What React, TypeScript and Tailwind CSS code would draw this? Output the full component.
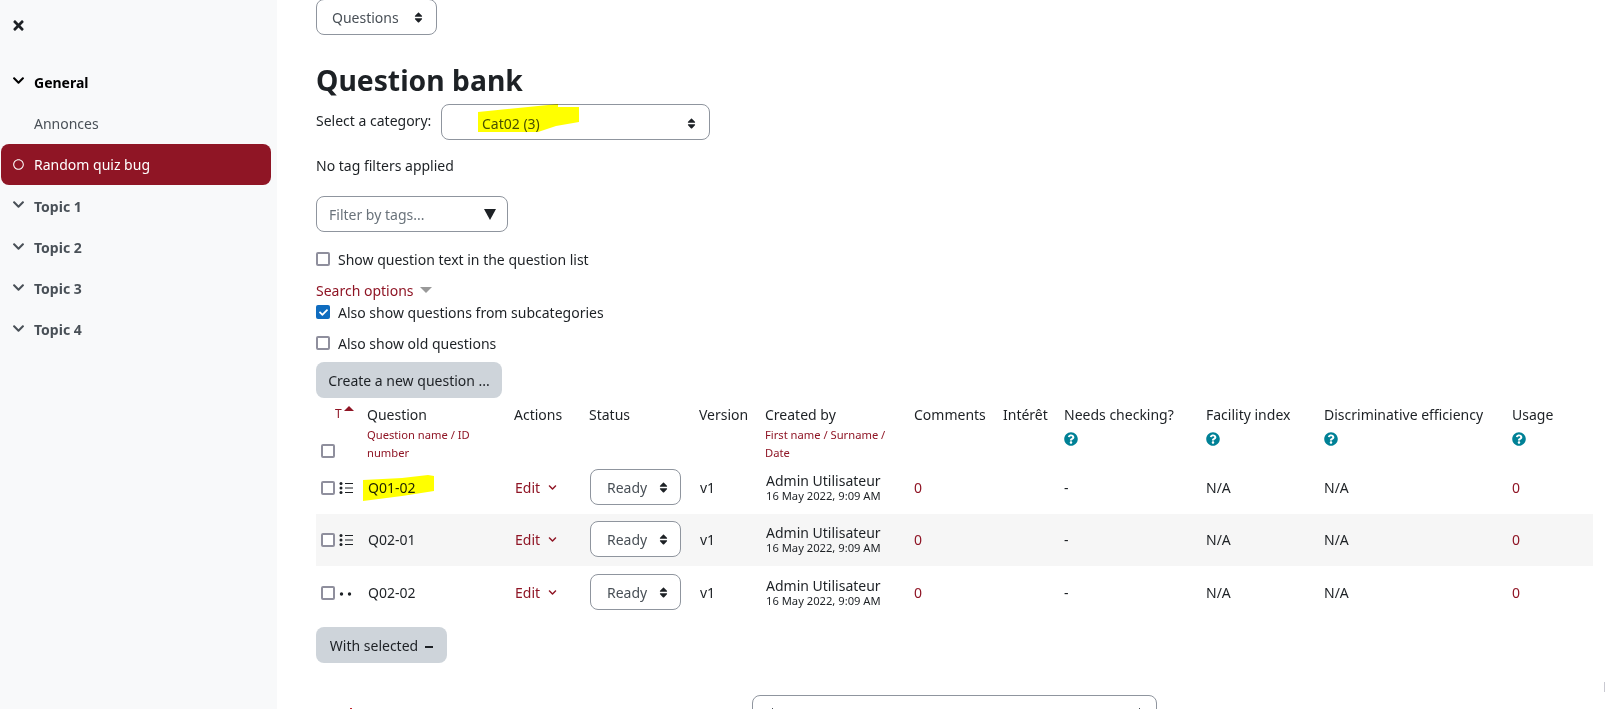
import React from "react";
import { FaChevronDown, FaQuestionCircle, FaRegCircle, FaSort, FaTimes, FaCheck } from "react-icons/fa";

const topics = ["Topic 1", "Topic 2", "Topic 3", "Topic 4"];

const questions = [
  { name: "Q01-02", icon: "list", highlighted: true, rowClass: "h-[52px]", bg: "" },
  { name: "Q02-01", icon: "list", highlighted: false, rowClass: "h-[52px]", bg: "bg-[#f6f6f6]" },
  { name: "Q02-02", icon: "dots", highlighted: false, rowClass: "h-[54px]", bg: "" },
];

function Checkbox({ checked = false }: { checked?: boolean }) {
  return checked ? (
    <span className="inline-flex h-[14px] w-[14px] shrink-0 items-center justify-center rounded-[2px] bg-[#0f6cbf] text-white">
      <FaCheck className="h-[9px] w-[9px]" />
    </span>
  ) : (
    <span className="inline-block h-[14px] w-[14px] shrink-0 rounded-[2px] border-2 border-[#8f8f9d] bg-white" />
  );
}

function ListIcon({ kind }: { kind: string }) {
  if (kind === "dots") {
    return (
      <svg width="14" height="14" viewBox="0 0 14 14" className="text-[#1d2125]">
        <circle cx="2.5" cy="8" r="1.7" fill="currentColor" />
        <circle cx="10.5" cy="8" r="1.7" fill="currentColor" />
      </svg>
    );
  }
  return (
    <svg width="14" height="14" viewBox="0 0 14 14" className="text-[#1d2125]">
      <circle cx="2" cy="2.5" r="1.5" fill="currentColor" />
      <circle cx="2" cy="7" r="1.5" fill="currentColor" />
      <circle cx="2" cy="11.5" r="1.5" fill="currentColor" />
      <path d="M6 2.5h8M6 7h8M6 11.5h8" stroke="currentColor" strokeWidth="1" />
    </svg>
  );
}

function SelectBox({ label, className }: { label: string; className: string }) {
  return (
    <div className={`flex items-center justify-between rounded-lg border border-[#8f959e] bg-white text-[#495057] ${className}`}>
      <span>{label}</span>
      <FaSort className="h-[13px] w-[13px] text-[#1d2125]" />
    </div>
  );
}

function HelpIcon() {
  return <FaQuestionCircle className="mt-[7px] h-[14px] w-[14px] text-[#008196]" />;
}

function Sidebar() {
  return (
    <aside className="w-[277px] shrink-0 bg-[#f8f9fa] pl-px pr-[6px]">
      <div className="flex h-[62px] items-start pl-[12px] pt-[18px]">
        <FaTimes className="h-[15px] w-[11px] text-[#1d2125]" />
      </div>
      <div className="flex h-[41px] items-center pb-[1px] text-black">
        <span className="flex w-[33px] justify-center pl-[2px]">
          <FaChevronDown className="mb-[3px] h-[13px] w-[13px]" />
        </span>
        <span className="font-bold">General</span>
      </div>
      <div className="flex h-[41px] items-center pb-[1px] pl-[33px] text-[#495057]">Annonces</div>
      <div className="flex h-[41px] items-center rounded-lg bg-[#8f1525] pb-[1px] text-white">
        <span className="flex w-[33px] justify-center pl-[2px]">
          <FaRegCircle className="h-[11px] w-[11px]" />
        </span>
        <span>Random quiz bug</span>
      </div>
      {topics.map((topic, i) => (
        <div key={topic} className={`flex items-center text-[#495057] ${i === 0 ? "h-[42px]" : "h-[41px]"}`}>
          <span className="flex w-[33px] justify-center pl-[2px]">
            <FaChevronDown className="mb-[3px] h-[13px] w-[13px]" />
          </span>
          <span className="font-bold">{topic}</span>
        </div>
      ))}
    </aside>
  );
}

function QuestionTable() {
  return (
    <table className="mt-[2px] w-[1277px] table-fixed text-left">
      <colgroup>
        <col className="w-[46px]" />
        <col className="w-[147px]" />
        <col className="w-[75px]" />
        <col className="w-[110px]" />
        <col className="w-[66px]" />
        <col className="w-[149px]" />
        <col className="w-[89px]" />
        <col className="w-[61px]" />
        <col className="w-[142px]" />
        <col className="w-[118px]" />
        <col className="w-[188px]" />
        <col className="w-[86px]" />
      </colgroup>
      <thead>
        <tr className="h-[62px] align-top font-normal">
          <th className="relative pl-[5px] font-normal">
            <span className="absolute left-[19px] top-[5px] text-[12px] leading-[18px] text-[#8f1525]">T</span>
            <svg width="10" height="5" viewBox="0 0 10 5" className="absolute left-[28px] top-[6px] text-[#8f1525]">
              <polygon points="5,0 10,5 0,5" fill="currentColor" />
            </svg>
            <span className="absolute left-[5px] top-[44px] flex">
              <Checkbox />
            </span>
          </th>
          <th className="pl-[5px] pt-[5px] font-normal">
            <div className="leading-[20px]">Question</div>
            <div className="mt-[1px] text-[11.2px] leading-[18px] text-[#8f1525]">Question name / ID number</div>
          </th>
          <th className="pl-[5px] pt-[5px] font-normal leading-[20px]">Actions</th>
          <th className="pl-[5px] pt-[5px] font-normal leading-[20px]">Status</th>
          <th className="pl-[5px] pt-[5px] font-normal leading-[20px]">Version</th>
          <th className="pl-[5px] pt-[5px] font-normal">
            <div className="leading-[20px]">Created by</div>
            <div className="mt-[1px] text-[11.2px] leading-[18px] text-[#8f1525]">First name / Surname / Date</div>
          </th>
          <th className="pl-[5px] pt-[5px] font-normal leading-[20px]">Comments</th>
          <th className="pl-[5px] pt-[5px] font-normal leading-[20px]">Intérêt</th>
          {["Needs checking?", "Facility index", "Discriminative efficiency", "Usage"].map((title) => (
            <th key={title} className="pl-[5px] pt-[5px] font-normal leading-[20px]">
              <div>{title}</div>
              <HelpIcon />
            </th>
          ))}
        </tr>
      </thead>
      <tbody>
        {questions.map((q) => (
          <tr key={q.name} className={`${q.rowClass} ${q.bg}`}>
            <td className="pl-[5px]">
              <div className="flex items-center gap-[4px]">
                <Checkbox />
                <ListIcon kind={q.icon} />
              </div>
            </td>
            <td className="relative pb-[2px] pl-[6px]">
              <span>{q.name}</span>
              {q.highlighted && (
                <svg width="72" height="26" viewBox="0 0 72 26" className="pointer-events-none absolute left-0 top-[13px] mix-blend-multiply">
                  <polygon points="1,5 40,3 66,0 72,1 72,16 40,21 1,26" fill="#ffff00" />
                </svg>
              )}
            </td>
            <td className="pb-[2px] pl-[6px]">
              <span className="flex items-center gap-[8px] text-[#8f1525]">
                Edit <FaChevronDown className="h-[9px] w-[9px]" />
              </span>
            </td>
            <td className="pb-[2px] pl-[6px]">
              <SelectBox label="Ready" className="h-[36px] w-[91px] pl-[16px] pr-[10px]" />
            </td>
            <td className="pb-[2px] pl-[6px]">v1</td>
            <td className="pl-[6px]">
              <div className="pb-[2px]">
                <div className="leading-[17px]">Admin Utilisateur</div>
                <div className="text-[11.2px] leading-[14px]">16 May 2022, 9:09 AM</div>
              </div>
            </td>
            <td className="pb-[2px] pl-[5px] text-[#8f1525]">0</td>
            <td className="pl-[5px]" />
            <td className="pb-[2px] pl-[5px]">-</td>
            <td className="pb-[2px] pl-[5px]">N/A</td>
            <td className="pb-[2px] pl-[5px]">N/A</td>
            <td className="pb-[2px] pl-[5px] text-[#8f1525]">0</td>
          </tr>
        ))}
      </tbody>
    </table>
  );
}

export default function App() {
  return (
    <div className="flex h-[709px] w-[1605px] overflow-hidden bg-white font-['Noto_Sans','Open_Sans',sans-serif] text-[14px] text-[#1d2125]">
      <Sidebar />
      <main className="relative min-w-0 flex-1 pl-[39px]">
        <SelectBox label="Questions" className="-mt-px h-[36px] w-[121px] pl-[15px] pr-[11px]" />

        <h2 className="mt-[25px] text-[28.3px] font-bold leading-[40px]">Question bank</h2>

        <div className="mt-[4px] flex items-center">
          <span className="w-[125px] pb-[4px]">Select a category:</span>
          <div className="relative">
            <SelectBox label="Cat02 (3)" className="h-[36px] w-[269px] pl-[40px] pr-[11px] pt-[2px]" />
            <svg width="102" height="28" viewBox="0 0 102 28" className="pointer-events-none absolute left-[37px] top-0 mix-blend-multiply">
              <polygon points="0,8 60,2 80,0 80,3 101,3 101,18 78,22 60,28 0,28" fill="#ffff00" />
            </svg>
          </div>
        </div>

        <p className="mt-[16px] leading-[20px]">No tag filters applied</p>

        <div className="mt-[20px] flex h-[36px] w-[192px] items-center justify-between rounded-lg border border-[#8f959e] pl-[12px] pr-[11px] text-[#6a737b]">
          <span>Filter by tags...</span>
          <svg width="12" height="11" viewBox="0 0 12 11" className="text-[#1d2125]">
            <polygon points="0,0 12,0 6,11" fill="currentColor" />
          </svg>
        </div>

        <label className="mt-[17px] flex h-[20px] items-center gap-[8px]">
          <Checkbox />
          Show question text in the question list
        </label>

        <div className="mt-[11px] flex h-[20px] items-center gap-[6px] text-[#8f1525]">
          Search options
          <svg width="12" height="6" viewBox="0 0 12 6" className="text-[#999]">
            <polygon points="0,0 12,0 6,6" fill="currentColor" />
          </svg>
        </div>

        <label className="mt-[2px] flex h-[20px] items-center gap-[8px]">
          <Checkbox checked />
          Also show questions from subcategories
        </label>

        <label className="mt-[11px] flex h-[20px] items-center gap-[8px]">
          <Checkbox />
          Also show old questions
        </label>

        <button className="mt-[9px] flex h-[36px] w-[186px] items-center justify-center rounded-lg bg-[#ced4da]">
          Create a new question ...
        </button>

        <QuestionTable />

        <button className="mt-[7px] flex h-[36px] w-[131px] items-center justify-center gap-[7px] rounded-lg bg-[#ced4da]">
          With selected
          <span className="mt-[3px] h-[2px] w-[8px] bg-[#1d2125]" />
        </button>

        <div className="mt-[32px] flex">
          <span className="ml-[34px] mt-[13px] h-px w-[2px] bg-[#c1272d]" />
          <div className="ml-[400px] flex h-[36px] w-[405px] justify-between rounded-lg border border-[#8f959e] pl-[19px] pr-[16px] pt-[12px]">
            <span className="h-px w-[1px] bg-[#495057]" />
            <span className="h-px w-[1px] bg-[#495057]" />
          </div>
        </div>

        <span className="absolute right-0 top-[682px] h-[10px] w-px bg-[#c9c9d1]" />
      </main>
    </div>
  );
}
